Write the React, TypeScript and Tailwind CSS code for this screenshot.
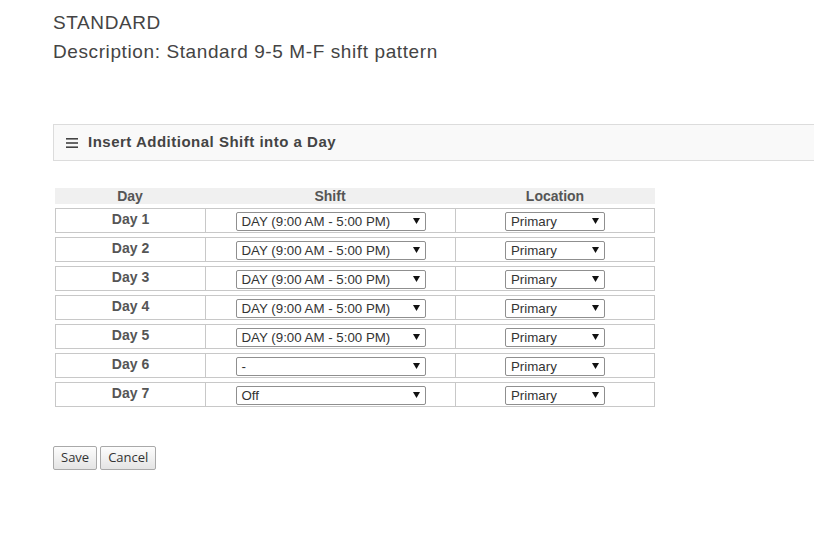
export default function App() {
  const days = [
    { day: "Day 1", shift: "DAY (9:00 AM - 5:00 PM)" },
    { day: "Day 2", shift: "DAY (9:00 AM - 5:00 PM)" },
    { day: "Day 3", shift: "DAY (9:00 AM - 5:00 PM)" },
    { day: "Day 4", shift: "DAY (9:00 AM - 5:00 PM)" },
    { day: "Day 5", shift: "DAY (9:00 AM - 5:00 PM)" },
    { day: "Day 6", shift: "-" },
    { day: "Day 7", shift: "Off" },
  ];

  return (
    <div className="min-h-screen w-full overflow-hidden bg-white font-['Liberation_Sans',Arial,sans-serif]">
      <div className="pl-[53px] pt-[11px]">
        {/* Heading */}
        <h1 className="text-[19px] leading-[24px] tracking-[0.6px] text-[#444]">STANDARD</h1>
        <p className="mt-[5px] text-[19px] leading-[24px] tracking-[0.6px] text-[#444]">
          Description: Standard 9-5 M-F shift pattern
        </p>

        {/* Panel header */}
        <div className="mt-[60px] mr-[-40px] flex h-[37px] items-center border border-[#dcdcdc] bg-[#f9f9f9] pl-[12px]">
          <svg width="12" height="10" viewBox="0 0 12 10" className="mr-[10px]">
            <rect x="0" y="0" width="12" height="1.6" fill="#444" />
            <rect x="0" y="4.2" width="12" height="1.6" fill="#444" />
            <rect x="0" y="8.4" width="12" height="1.6" fill="#444" />
          </svg>
          <span className="text-[15px] font-bold tracking-[0.5px] text-[#444]">
            Insert Additional Shift into a Day
          </span>
        </div>

        {/* Table */}
        <div className="mt-[27px] ml-[2px] w-[600px] text-[14px] text-[#555]">
          <div className="flex h-[16px] items-center bg-[#f0f0f0] font-bold leading-[16px]">
            <div className="w-[150px] text-center">Day</div>
            <div className="w-[250px] text-center">Shift</div>
            <div className="w-[200px] text-center">Location</div>
          </div>

          <div className="mt-[4px] flex flex-col gap-[4px]">
            {days.map((d) => (
              <div key={d.day} className="flex h-[25px] border border-[#c8c8c8]">
                <div className="flex w-[149px] items-center justify-center pb-[2px] font-bold">
                  {d.day}
                </div>
                <div className="flex w-[250px] items-center justify-center border-l border-[#c8c8c8]">
                  <FakeSelect value={d.shift} width="w-[190px]" />
                </div>
                <div className="flex w-[199px] items-center justify-center border-l border-[#c8c8c8]">
                  <FakeSelect value="Primary" width="w-[100px]" />
                </div>
              </div>
            ))}
          </div>
        </div>

        {/* Buttons */}
        <div className="mt-[39px] flex gap-[3px] font-['Open_Sans',sans-serif] text-[13px] text-[#333]">
          <button className="h-[24px] rounded-[2px] border border-[#a9a9a9] bg-gradient-to-b from-[#fdfdfd] to-[#e4e4e4] px-[7px]">
            Save
          </button>
          <button className="h-[24px] rounded-[2px] border border-[#a9a9a9] bg-gradient-to-b from-[#fdfdfd] to-[#e4e4e4] px-[7px]">
            Cancel
          </button>
        </div>
      </div>
    </div>
  );
}

function FakeSelect({ value, width }: any) {
  return (
    <div
      className={`${width} mt-[1px] flex h-[19px] items-center justify-between rounded-[2px] border border-[#8f8f8f] bg-white pl-[5px] pr-[5px] text-[13.3px] leading-[17px] text-[#333]`}
    >
      <span>{value}</span>
      <svg width="7" height="6" viewBox="0 0 7 6">
        <polygon points="0,0 7,0 3.5,6" fill="#111" />
      </svg>
    </div>
  );
}
